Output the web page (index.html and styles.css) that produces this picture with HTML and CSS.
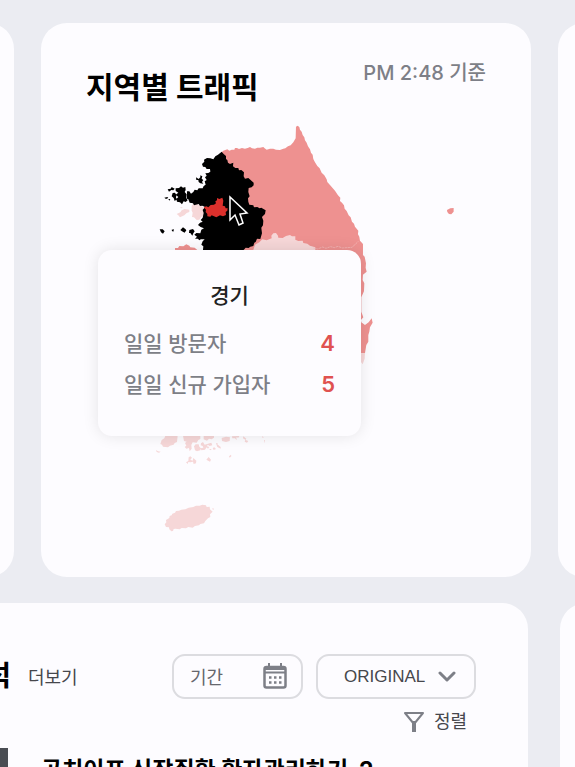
FILE: index.html
```html
<!DOCTYPE html>
<html lang="ko">
<head>
<meta charset="utf-8">
<meta name="viewport" content="width=device-width, initial-scale=1">
<title>지역별 트래픽</title>
<link rel="stylesheet" href="styles.css">
</head>
<body>
<main class="board">
  <div class="row row-traffic">
    <div class="card edge-left"></div>
    <section class="card traffic">
      <header class="traffic-head">
        <h2 class="title">지역별 트래픽</h2>
        <time class="time">PM 2:48 기준</time>
      </header>
      <div class="map">
        <svg class="map-svg" viewBox="41 110 490 467" aria-hidden="true">
          <g transform="translate(140 110) scale(.3333)">
            <path fill="#ee9190" d="M245 127L250 122L262 118L268 122L275 119L283 119L285 114L291 114L297 117L306 114L315 116L323 114L330 111L336 115L345 116L352 113L360 113L370 111L374 115L380 119L390 116L400 116L408 119L420 120L430 116L436 115L444 109L452 106L460 97L467 85L468 50L473 47L478 51L480 59L485 65L488 75L493 82L495 91L500 98L504 109L510 118L513 128L518 134L520 147L525 157L532 168L539 175L545 188L553 196L560 208L562 216L572 227L585 242L594 256L601 263L600 273L606 278L612 286L614 296L620 303L626 316L632 322L636 335L642 341L645 350L655 362L654 373L658 380L660 392L669 402L669 435L674 440L678 460L677 473L680 485L669 494L668 510L673 520L672 544L664 562V605L670 622L663 630L664 637L675 645L686 637L695 625L698 638L690 652L688 665L685 675V695L679 705L675 730H620L330 480L240 180Z"/>
            <path fill="#f6d7d8" d="M340 420L345 404L358 397L367 388L380 391L395 385L394 377L400 370L408 369L414 377L415 383L428 384L438 378L450 375L456 379L466 379L466 389L475 393L488 392L490 399L502 401L510 407L526 412V430H335Z"/>
            <path fill="none" stroke="#f4bfc0" stroke-width="2" stroke-dasharray="7 2" d="M520 414L533 417L548 411L558 415L572 410L583 413L594 409L607 414L621 413L636 412L646 403L655 394"/>
            <path fill="#ee9190" d="M105 420V414L114 414L118 408L130 409L139 403L148 407L151 412L164 413L172 420ZM921 300L931 295L941 294V305L934 313L927 312L922 306Z"/>
            <path fill="#f6d7d8" d="M155 287L162 280L172 282L181 287L190 291L191 298L197 307L194 316L184 321L178 329L170 330L162 322L156 321L158 308L155 302ZM110 312L121 307L125 301L134 297L148 299L148 306L140 309L133 316L120 322L115 316ZM119 293L128 291L125 295Z"/>
            <path fill="#000" d="M245 125L251 132L258 138L258 147L262 150L264 158L270 162L280 158L279 169L286 174L295 174L297 181L304 180L312 187L311 199L315 206L325 204L331 209L341 218L341 226L335 232L326 234L325 246L329 259L324 265L325 275L328 284L340 286L342 292L352 291L359 295L364 293L377 301L375 312L366 321L370 332L369 346L364 353L366 370L361 387L351 386L347 396L343 398L340 408L331 410L326 414L317 413L311 420H189L190 409L184 404L188 394L194 388H182L179 391L173 386L165 386L171 380L163 374L169 369L181 370L184 359L192 355L182 351L174 345L180 338L188 335L182 330L188 323L191 309L188 300L195 291L187 287L180 288L176 282L162 286L159 280L149 278L145 268L141 266V244H148L153 251L160 246L164 239L172 241L176 235L188 235L191 228L197 224L194 214L200 210L195 202L200 197L196 190L205 189L211 185L210 177L200 177L196 171L189 170L186 162L193 155L192 149L201 144L211 145L220 148L226 139L234 134Z"/>
            <path fill="#000" d="M107 235L117 234L123 229L129 233L136 231L137 240L134 246L140 253L139 264L143 271L137 276L131 274L126 283L120 277L111 275L109 267L115 261L107 254L115 248L107 243ZM83 238L92 236L95 231L104 236L100 241L94 240L87 245ZM98 249L105 248L109 255L108 263L111 268L104 273L101 264L95 259ZM73 263L82 261L85 264L78 267ZM85 267H91L88 272ZM168 202L176 207L181 202L181 196L187 199L185 206L190 210L186 216L190 221L181 220L176 216L175 210L169 210ZM59 358L68 358L74 364L69 371L63 367ZM95 359L102 358L100 365L96 363ZM121 360L129 352L136 357L139 361L134 368L126 364ZM148 360L159 357L164 364L160 370L157 377L151 369L147 369Z"/>
            <path fill="#dc302c" d="M191 292L199 289L205 292L212 285L222 284L228 280L226 274L231 271L231 264L238 267L247 263L250 272L248 287L255 289L257 295L263 295L262 302L257 306L258 315L249 319L240 316L229 322L215 316L211 320L202 319L202 312L197 306L198 299Z"/>
          </g>
          <g transform="translate(140 420) scale(.3333)" fill="#f6d7d8">
            <path d="M663 -200L675 -200L674 -184L668 -167L663 -174ZM61 72L65 60L73 55L76 47H113L111 66L104 69L101 74L90 77L84 82L69 80L66 74ZM129 47H181L181 57L175 60L170 68L158 67L154 75L155 86L149 94L147 84L139 86L134 81L139 77L135 69L140 65L132 63ZM191 47H222V53L215 58L207 56L201 62L191 58ZM245 54L258 50L270 52L269 63L258 66L246 63ZM276 49L298 48L295 53L289 52L290 61L285 55L277 55ZM310 49L319 56L317 60L325 63L321 68L314 65L316 59L309 55ZM368 47L371 53H367ZM372 60L375 61L373 70ZM162 79L167 73L176 73L178 80L183 85L181 91L171 94L165 91ZM183 70L189 66L194 74L204 71L214 68L217 76L209 78L203 74L201 79L208 81L204 86L200 82L195 89L184 91L182 85L190 83L188 78L182 76ZM207 87H215L212 91ZM218 84L223 82L228 87L221 90ZM228 70L233 69L232 73L242 81L242 86L232 81ZM48 90L54 94L62 95L57 98L50 96ZM138 127L145 123L146 112L151 109L156 113L151 119L158 122L160 114L169 122L168 130L161 132L159 125L151 127L145 126L143 132ZM199 119L206 111L213 119L210 125ZM267 109L273 104L274 109L269 113ZM74 313L79 307L78 300L88 294L89 288L95 286L97 281L105 278L108 273L117 272L124 269L136 268L146 263L160 261L168 257L179 257L187 254L198 256L200 261L209 260L210 268L218 275L210 283L211 291L204 295L196 303L192 310L181 312L177 316L165 318L158 323L145 321L138 325L125 324L119 328L106 326L101 327L99 333L94 334L88 328L87 322L78 321ZM217 264L222 266L219 271Z"/>
          </g>
          <path stroke="#fff" stroke-width="1.5" d="M230 197L230 220L235 215L239 225L243 223L240 214L247 213Z"/>
        </svg>
        <div class="tooltip" role="tooltip">
          <h3 class="region">경기</h3>
          <dl class="stats">
            <div class="stat"><dt>일일 방문자</dt><dd>4</dd></div>
            <div class="stat"><dt>일일 신규 가입자</dt><dd>5</dd></div>
          </dl>
        </div>
      </div>
    </section>
    <div class="card edge-right"></div>
  </div>
  <div class="row row-analysis">
    <section class="card analysis">
      <header class="toolbar">
        <h2 class="title cut-title"><span>분석</span></h2>
        <a class="more" href="#">더보기</a>
        <button class="control period" type="button">기간
          <svg width="24" height="26" viewBox="0 0 24 26" fill="none" stroke="#7d7f87" stroke-width="2" aria-hidden="true">
            <rect x="1.5" y="4" width="21" height="20.500" rx="2" stroke-width="2.500"/><path d="M2 6H22M2 9.500H22M6 0V5M18 0V5"/><path stroke-width="2.500" stroke-dasharray="2.500 2.500" d="M6 14.500H18.500M6 19.500H18.500"/>
          </svg>
        </button>
        <div class="select-wrap">
          <select class="control select" aria-label="콘텐츠 유형"><option>ORIGINAL</option></select>
          <svg class="chevron" width="18" height="12" viewBox="0 0 18 12" fill="none" stroke="#7d7f87" stroke-width="3" stroke-linecap="round" stroke-linejoin="round" aria-hidden="true"><path d="M2 2L9 9L16 2"/></svg>
        </div>
      </header>
      <button class="sort" type="button">
        <svg width="20" height="20" viewBox="0 0 20 20" aria-hidden="true"><path fill="none" stroke="#7d7f87" stroke-width="2" stroke-linejoin="round" d="M1 1H19L10 12Z"/><path fill="#7d7f87" d="M8 9H12V20H8Z"/></svg>
        정렬
      </button>
      <article class="item">
        <div class="thumb"></div>
        <h3 class="item-title">공치이프 신장질환 환자관리하기_2</h3>
      </article>
    </section>
    <div class="card edge-right"></div>
  </div>
</main>
</body>
</html>
```
FILE: styles.css
```css
* { box-sizing: border-box; }
html, body { height: 100%; }
body {
  margin: 0;
  overflow: hidden;
  background: #ebecf2;
  color: #000;
  font-family: Inter, "Noto Sans CJK KR", sans-serif;
}
h2, h3, dl, dd { margin: 0; }
button, select { font: inherit; color: inherit; }
.board { display: grid; gap: 26px; padding-top: 23px; }
.row { display: grid; }
.row-traffic { grid-template-columns: 14px 1fr 17px; gap: 27px; }
.row-analysis { grid-template-columns: 1fr 15px; gap: 32px; }
.card { background: #fdfcff; border-radius: 26px; }
.edge-left, .edge-right { position: relative; overflow: hidden; background: none; border-radius: 0; }
.edge-left::before, .edge-right::before {
  content: "";
  position: absolute;
  top: 0;
  bottom: 0;
  width: 100px;
  border-radius: 26px;
  background: #fdfcff;
}
.edge-left::before { right: 0; }
.edge-right::before { left: 0; }
.traffic-head {
  display: flex;
  justify-content: space-between;
  height: 87px;
  padding: 36px 45px 0;
}
.title { font-size: 30px; line-height: 56px; font-weight: 700; }
.time { font-size: 20px; line-height: 28px; font-weight: 500; color: #7d7f87; }
.map { position: relative; }
.map-svg { display: block; width: 100%; }
.tooltip {
  position: absolute;
  left: 57px;
  top: 140px;
  width: 263px;
  height: 186px;
  padding: 28px 26px;
  border-radius: 14px;
  background: #fdfcff;
  box-shadow: 0 0 16px rgba(0, 0, 0, 0.1);
}
.region { font-size: 21px; line-height: 36px; font-weight: 500; text-align: center; color: #222; }
.stats { padding-top: 9px; }
.stat { display: flex; justify-content: space-between; font-size: 21px; line-height: 41px; font-weight: 500; color: #7d7f87; }
.stat dd { font-size: 22px; font-weight: 600; color: #e05250; }
.analysis { border-top-left-radius: 0; padding-top: 51px; }
.toolbar { display: flex; align-items: center; height: 44px; padding-right: 52px; color: #46474c; }
.cut-title { display: flex; justify-content: flex-end; width: 11px; overflow: hidden; white-space: nowrap; font-size: 28px; line-height: 44px; color: #000; }
.more { margin-left: 17px; font-size: 18px; color: inherit; text-decoration: none; }
.control { height: 45px; border: 2px solid #dcdce0; border-radius: 13px; background: #fdfcff; font-size: 18px; }
.period { display: flex; align-items: center; justify-content: space-between; width: 131px; margin-left: auto; padding: 0 14px 0 16px; color: #66676d; }
.select-wrap { position: relative; width: 160px; margin-left: 13px; }
.select { display: block; width: 100%; padding: 0 26px; appearance: none; font-family: "Liberation Sans", sans-serif; font-size: 17px; }
.chevron { position: absolute; right: 20px; top: 17px; pointer-events: none; }
.sort { display: flex; align-items: center; gap: 10px; margin: 11px 61px 0 auto; padding: 0; border: 0; background: none; font-size: 18px; line-height: 26px; color: #46474c; }
.item { display: flex; gap: 33px; padding-top: 13px; }
.thumb { width: 8px; height: 80px; background: #4a4d53; }
.item-title { font-size: 23px; line-height: 32px; font-weight: 700; padding-top: 6px; }
```
